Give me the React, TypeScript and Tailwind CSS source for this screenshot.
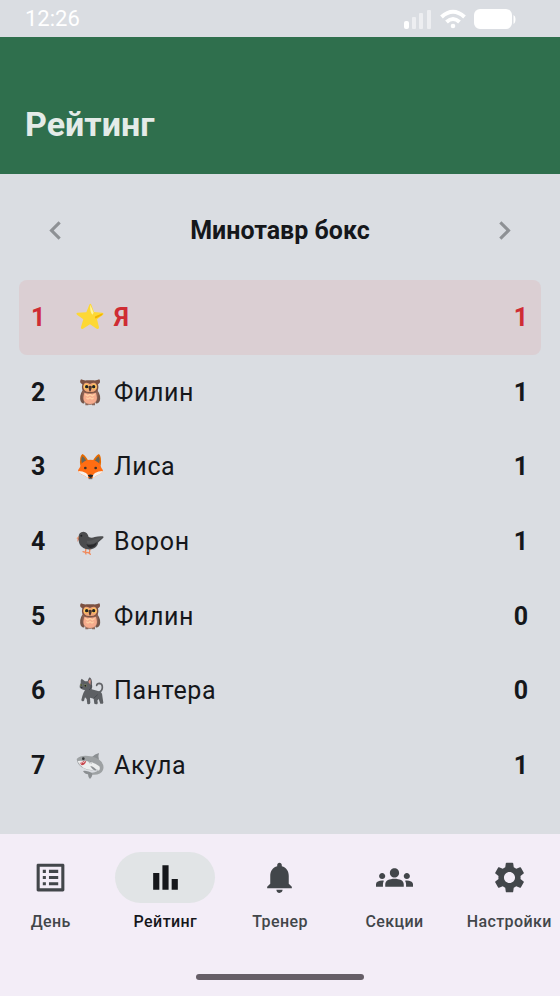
import type { ReactNode } from 'react';
import {
  MdBarChart,
  MdChevronLeft,
  MdChevronRight,
  MdGroups,
  MdListAlt,
  MdNotifications,
  MdSettings,
} from 'react-icons/md';

function Emoji({ children }: { children: ReactNode }) {
  return (
    <svg viewBox="0 0 84 84" className="h-7 w-7 shrink-0" aria-hidden="true">
      {children}
    </svg>
  );
}

function Star() {
  return (
    <Emoji>
      <path
        d="M40 5Q43 0 46 5L54 27L79 29Q85 31 81 35L63 49L69 73Q69 80 62 77L42 64L21 77Q14 80 15 72L22 49L3 35Q-1 30 5 29L31 28Z"
        fill="#fdd835"
      />
      <path d="M43 5L53 29L49 35Q41 25 43 5Z" fill="#fff59d" />
      <path d="M80 31L58 40Q54 47 61 46L79 36Z" fill="#f4b400" />
    </Emoji>
  );
}

function Owl() {
  return (
    <Emoji>
      <path d="M28 76h9v6h-9zM48 76h9v6h-9z" fill="#8a6a5e" />
      <path d="M19 38Q9 53 14 70Q19 79 25 76L25 40ZM65 38Q76 53 71 70Q65 79 59 76L59 40Z" fill="#75564a" />
      <path d="M20 32H65Q72 79 42 80Q13 79 20 32Z" fill="#8d6252" />
      <path d="M25 44Q42 50 60 44Q70 77 42 78Q15 77 25 44Z" fill="#f5ab8d" />
      <path d="M28 49l7 5 7-5 7 5 7-5M31 59l5 4 6-4 6 4 5-4" stroke="#ffcfa2" strokeWidth="4" fill="none" />
      <path d="M15 4Q23 8 32 7H53Q62 8 70 4Q76 14 66 19Q71 38 57 43Q42 48 28 43Q14 38 19 19Q8 14 15 4Z" fill="#7c5142" />
      <path d="M42 18Q22 7 22 28Q23 43 42 42Q62 43 63 28Q62 7 42 18Z" fill="#efa476" />
      <circle cx="31" cy="26" r="8" fill="#ffc65c" />
      <circle cx="54" cy="26" r="8" fill="#ffc65c" />
      <circle cx="32" cy="26" r="5" fill="#202124" />
      <circle cx="53" cy="26" r="5" fill="#202124" />
      <path d="M37 26Q42 21 48 26L44 39Q42 42 40 39Z" fill="#4a342e" />
    </Emoji>
  );
}

function Fox() {
  return (
    <Emoji>
      <path d="M19 3Q9 12 13 38L37 25Q30 8 19 3ZM69 3Q78 12 74 38L50 25Q58 8 69 3Z" fill="#e66a00" />
      <path d="M19 10Q13 21 19 33L31 24Q28 15 19 10ZM68 10Q74 21 68 33L56 24Q60 15 68 10Z" fill="#67675a" />
      <path d="M43 20Q62 20 72 34Q75 45 81 52Q78 62 64 67L50 75Q43 79 36 75L23 67Q9 63 6 52Q13 44 15 34Q25 20 43 20Z" fill="#ff6d13" />
      <path d="M7 54Q20 54 30 60L38 68L36 75L23 67Q10 63 7 54ZM80 54Q67 54 57 60L49 68L51 75L64 67Q77 63 80 54Z" fill="#f7efe9" />
      <circle cx="28" cy="45" r="4" fill="#3d302b" />
      <circle cx="59" cy="45" r="4" fill="#3d302b" />
      <path d="M35 67Q43 62 52 67Q50 74 44 75Q38 74 35 67Z" fill="#26282c" />
      <path d="M38 77h11" stroke="#616161" strokeWidth="3" />
    </Emoji>
  );
}

function Crow() {
  return (
    <Emoji>
      <path d="M30 61L28 74M42 61L40 76M28 73l-7-2M28 73l2 5M40 75l-8-2M40 75l3 4" stroke="#f08a5d" strokeWidth="4" fill="none" strokeLinecap="round" />
      <path d="M11 22L1 31L10 36Z" fill="#f2a078" />
      <path d="M5 30L11 32L4 42Z" fill="#e38162" />
      <path d="M8 29Q7 12 22 11Q35 12 38 27Q47 31 56 27Q68 24 80 25Q86 27 78 33L67 43Q64 60 46 64Q20 67 11 49Q7 40 8 29Z" fill="#4b4c4e" />
      <path d="M31 48Q47 55 63 43Q58 60 43 60Q34 58 31 48Z" fill="#29292c" />
      <path d="M32 38Q45 40 60 32L78 28L63 41Q47 51 34 46Z" fill="#565759" />
      <circle cx="16" cy="23" r="3" fill="#202124" />
    </Emoji>
  );
}

function Cat() {
  return (
    <Emoji>
      <path d="M68 47Q78 43 79 33Q80 20 70 19Q63 19 62 25" fill="none" stroke="#626468" strokeWidth="5" strokeLinecap="round" />
      <path d="M14 18Q13 8 17 5L27 13L35 13Q37 4 41 1Q49 5 48 22Q50 31 47 37L66 42Q79 44 79 57L82 77Q81 82 73 80L68 66L64 71Q68 82 60 82L55 80L53 65L42 62L43 77Q42 83 34 81L32 66L27 61L24 71Q18 76 16 69L19 57Q22 47 27 39Q14 38 11 31Q10 25 14 18Z" fill="#5d6064" />
      <path d="M37 15Q39 8 43 7Q46 12 43 23Z" fill="#d88f80" />
      <path d="M46 24Q47 34 39 39" stroke="#46494e" strokeWidth="3" fill="none" />
      <circle cx="16" cy="24" r="3" fill="#a8b66c" />
      <circle cx="28" cy="26" r="4" fill="#8d9a64" />
      <circle cx="16" cy="24" r="2" fill="#202124" />
      <circle cx="28" cy="26" r="3" fill="#202124" />
      <path d="M14 30h6l-3 4z" fill="#25282c" />
      <path d="M53 64L65 53" stroke="#484b50" strokeWidth="3" />
    </Emoji>
  );
}

function Shark() {
  return (
    <Emoji>
      <path d="M47 16Q57 5 69 3Q65 13 69 24Z" fill="#8b8f92" />
      <path d="M51 64Q32 54 21 57Q27 67 36 67Q36 76 42 81Q48 75 50 66Z" fill="#8b8f92" />
      <path d="M2 21Q14 9 37 12Q62 14 75 28Q86 41 81 54Q75 70 48 68L48 62Q68 61 66 50Q44 61 22 48Q5 41 2 21Z" fill="#9da1a3" />
      <path d="M5 27Q16 25 34 28Q57 32 70 43Q74 51 68 57Q65 48 62 52Q41 58 23 48Q10 41 5 27Z" fill="#eceeee" />
      <path d="M11 33Q18 27 30 26Q29 39 17 40Z" fill="#c64249" />
      <path d="M12 32l4 2 3-5 4 3 5-6" stroke="#fff" strokeWidth="2" fill="none" />
      <circle cx="22" cy="20" r="4" fill="#333638" />
      <path d="M38 26l3 8M43 27l3 8" stroke="#8b8f92" strokeWidth="2" />
      <path d="M43 42Q55 44 62 55Q52 58 43 42Z" fill="#8b8f92" />
    </Emoji>
  );
}

const players = [
  { name: 'Я', score: 1, icon: <Star />, me: true },
  { name: 'Филин', score: 1, icon: <Owl /> },
  { name: 'Лиса', score: 1, icon: <Fox /> },
  { name: 'Ворон', score: 1, icon: <Crow /> },
  { name: 'Филин', score: 0, icon: <Owl /> },
  { name: 'Пантера', score: 0, icon: <Cat /> },
  { name: 'Акула', score: 1, icon: <Shark /> },
];

const tabs = [
  { label: 'День', Icon: MdListAlt },
  { label: 'Рейтинг', Icon: MdBarChart, active: true },
  { label: 'Тренер', Icon: MdNotifications },
  { label: 'Секции', Icon: MdGroups },
  { label: 'Настройки', Icon: MdSettings },
];

function StatusBar() {
  return (
    <div className="flex h-[37px] items-center justify-between pr-[43px] pl-[25px] text-white">
      <span className="text-[22px] leading-7">12:26</span>
      <div className="flex items-center gap-2">
        <svg viewBox="0 0 28 20" className="h-5 w-7" fill="currentColor" aria-hidden="true">
          <rect x="0" y="12" width="5" height="8" rx="2" />
          <rect x="8" y="8" width="4" height="12" rx="1" opacity=".5" />
          <rect x="15" y="4" width="4" height="16" rx="1" opacity=".5" />
          <rect x="23" y="1" width="4" height="19" rx="1" opacity=".5" />
        </svg>
        <svg viewBox="0 0 26 20" className="h-5 w-[26px]" fill="none" stroke="currentColor" strokeWidth="4" aria-hidden="true">
          <path d="M1.5 8Q13-2.5 24.500 8" />
          <path d="M6.500 13Q13 7 19.500 13" />
          <circle cx="13" cy="17" r="2.300" fill="currentColor" stroke="none" />
        </svg>
        <svg viewBox="0 0 43 20" className="h-5 w-[43px]" fill="currentColor" aria-hidden="true">
          <rect width="38" height="20" rx="6" />
          <path d="M39.500 6Q41.500 7 41.500 10Q41.500 14 39.500 15Z" />
        </svg>
      </div>
    </div>
  );
}

export default function App() {
  return (
    <div className="flex min-h-screen flex-col bg-[#dadde2] font-['Roboto',sans-serif] text-[#15171b]">
      <StatusBar />
      <header className="flex h-[137px] items-end bg-[#2f6f4d] px-[25px] pb-[30px]">
        <h1 className="text-[34px] leading-10 font-bold text-[#e4ebe8]">Рейтинг</h1>
      </header>

      <main className="flex-1 px-[19px] pt-[38px] pb-[31px]">
        <div className="flex items-center justify-between px-[18px]">
          <button type="button" aria-label="Предыдущая секция" className="text-[#8e9195]">
            <MdChevronLeft className="size-[37px]" />
          </button>
          <h2 className="text-[25px] leading-[37px] font-bold">Минотавр бокс</h2>
          <button type="button" aria-label="Следующая секция" className="text-[#8e9195]">
            <MdChevronRight className="size-[37px]" />
          </button>
        </div>

        <ol className="mt-[31px] flex h-[523px] flex-col text-[25px] leading-[37px]">
          {players.map((p, i) => (
            <li
              key={i}
              className={
                p.me
                  ? 'flex flex-1 items-center rounded-lg bg-[#dbcfd3] pr-[13px] pl-3 font-bold text-[#cf2c33]'
                  : 'flex flex-1 items-center rounded-lg pr-[13px] pl-3'
              }
            >
              <span className="w-[45px] font-bold">{i + 1}</span>
              {p.icon}
              <span className="ml-2.5 flex-1 tracking-wide">{p.name}</span>
              <span className="font-bold">{p.score}</span>
            </li>
          ))}
        </ol>
      </main>

      <nav className="bg-[#f3edf7] pt-[18px] pb-4">
        <div className="grid grid-cols-5 gap-[13px]">
          {tabs.map(({ label, Icon, active }) => (
            <button
              key={label}
              type="button"
              aria-current={active ? 'page' : undefined}
              className={
                active
                  ? 'flex flex-col items-center gap-[7px] text-[#15171b]'
                  : 'flex flex-col items-center gap-[7px] text-[#42464a]'
              }
            >
              <span
                className={
                  active
                    ? 'flex h-[51px] w-[100px] items-center justify-center rounded-full bg-[#e1e4e6]'
                    : 'flex h-[51px] w-[100px] items-center justify-center rounded-full'
                }
              >
                <Icon className="size-[37px]" />
              </span>
              <span className="text-base leading-6 font-medium tracking-wide">{label}</span>
            </button>
          ))}
        </div>
        <div className="mx-auto mt-10 h-1.5 w-[168px] rounded-full bg-[#655e67]" />
      </nav>
    </div>
  );
}
